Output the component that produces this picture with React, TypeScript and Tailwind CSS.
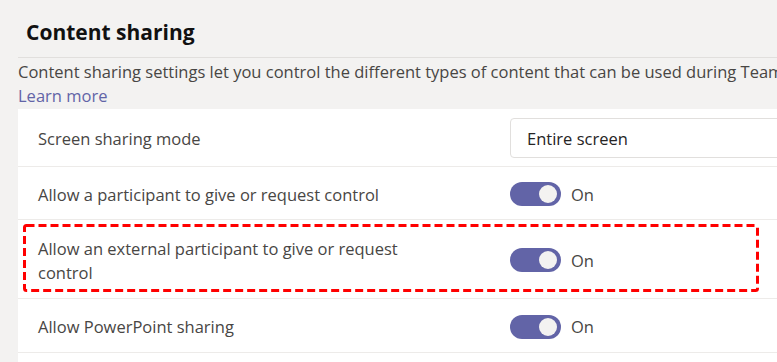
import React from "react";

function Toggle() {
  return (
    <div className="flex items-center gap-[10px] shrink-0 mt-[2px]">
      <div className="w-[51px] h-[24px] rounded-full bg-[#6264a7] flex items-center justify-end pr-[4px]">
        <div className="w-[18px] h-[18px] rounded-full bg-[#f3f2f1]" />
      </div>
      <span className="text-[16.5px] text-[#484644] pt-[2px]">On</span>
    </div>
  );
}

export default function App() {
  return (
    <div className="w-[777px] h-[362px] bg-[#f3f2f1] overflow-hidden font-['Open_Sans',sans-serif] text-[#252424]">
      <div className="pl-[18px]">
        <h2 className="pt-[18px] pl-[8px] text-[21px] leading-[28px] font-bold text-[#111111] mb-[11px]">
          Content sharing
        </h2>
        <div className="border-t border-[#e1dfdd]" />
        <p className="mt-[2px] whitespace-nowrap text-[16.5px] leading-[24px] text-[#484644]">
          Content sharing settings let you control the different types of content that can be used during Teams meetings.
        </p>
        <a className="block text-[16.5px] leading-[24px] text-[#6264a7]">Learn more</a>
        <div className="mt-[1px] bg-white">
          <div className="h-[58px] flex items-center border-b border-[#edebe9]">
            <div className="w-[492px] shrink-0 pl-[20px] pt-[4px] text-[16.5px] text-[#484644]">Screen sharing mode</div>
            <div className="h-[40px] w-[300px] shrink-0 mt-[1px] border border-[#e1dfdd] rounded-[4px] flex items-center pl-[16px] pt-[2px] text-[16.5px] text-[#252424]">
              Entire screen
            </div>
          </div>
          <div className="h-[53px] flex items-center border-b border-[#edebe9]">
            <div className="w-[492px] shrink-0 pl-[20px] pt-[4px] text-[16.5px] text-[#484644]">Allow a participant to give or request control</div>
            <Toggle />
          </div>
          <div className="relative h-[79px] flex items-center border-b border-[#edebe9]">
            <div className="w-[492px] shrink-0 pl-[20px] pt-[4px]">
              <div className="max-w-[385px] text-[16.5px] leading-[24px] text-[#484644]">
                Allow an external participant to give or request control
              </div>
            </div>
            <Toggle />
            <svg className="absolute left-[5px] top-[4px]" width="736" height="68" viewBox="0 0 736 68">
              <rect x="1.5" y="1.5" width="733" height="65" rx="2" fill="none" stroke="#ff0000" strokeWidth="3" strokeDasharray="8 4" />
            </svg>
          </div>
          <div className="h-[54px] flex items-center border-b border-[#edebe9]">
            <div className="w-[492px] shrink-0 pl-[20px] pt-[4px] text-[16.5px] text-[#484644]">Allow PowerPoint sharing</div>
            <Toggle />
          </div>
          <div className="h-[20px]" />
        </div>
      </div>
    </div>
  );
}
